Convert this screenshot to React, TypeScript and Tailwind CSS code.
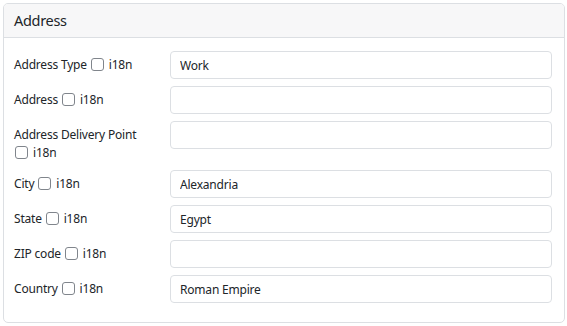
const fields = [
  { label: "Address Type", value: "Work" },
  { label: "Address", value: "" },
  { label: "Address Delivery Point", value: "" },
  { label: "City", value: "Alexandria" },
  { label: "State", value: "Egypt" },
  { label: "ZIP code", value: "" },
  { label: "Country", value: "Roman Empire" },
];

const App = () => {
  return (
    <div className="p-[3px] bg-white" style={{ fontFamily: '"Noto Sans", "Open Sans", sans-serif' }}>
      <div className="w-[562px] h-[320px] border border-[#dcdfe3] rounded-[5px] overflow-hidden text-[#212529]">
        <div className="h-[34px] bg-[#f7f7f8] border-b border-[#dcdfe3] px-[10px] flex items-center text-[14.5px] tracking-[-0.3px]">
          Address
        </div>
        <div className="pt-[13px] pl-[10px] pr-[12px] flex flex-col gap-[7px]">
          {fields.map((f, i) => (
            <div key={i} className="flex items-start">
              <div className="w-[156px] pt-[5px] pb-[1px] pr-[14px] text-[12px] tracking-[-0.2px] leading-[18px]">
                {f.label}{" "}
                <span className="whitespace-nowrap">
                  <input
                    type="checkbox"
                    className="appearance-none w-[13px] h-[13px] border border-[#80858c] rounded-[3px] bg-white align-[-2px] ml-[1px] mr-[5px]"
                  />
                  i18n
                </span>
              </div>
              <input
                readOnly
                value={f.value}
                className="flex-1 h-[28px] border border-[#dcdfe3] rounded-[4px] px-[9px] text-[12px] tracking-[-0.2px] text-[#212529] bg-white outline-none"
              />
            </div>
          ))}
        </div>
      </div>
    </div>
  );
};

export default App;
